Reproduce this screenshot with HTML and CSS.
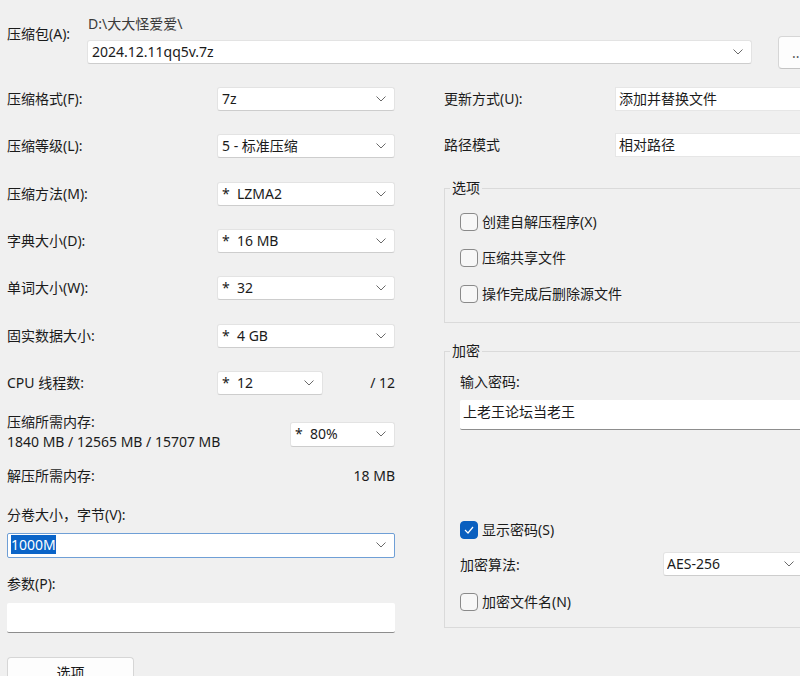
FILE: index.html
```html
<!DOCTYPE html>
<html lang="zh-CN">
<head>
<meta charset="utf-8">
<title>添加到压缩包</title>
<link rel="stylesheet" href="styles.css">
</head>
<body>
<div class="page">
  <div class="top">
    <div class="top-label">压缩包(A):</div>
    <div class="top-mid">
      <div class="path">D:\大大怪爱爱\</div>
      <div class="combo combo-wide"><span class="val">2024.12.11qq5v.7z</span><svg class="chev" width="10" height="6" viewBox="0 0 10 6"><polyline points="0.5,0.5 5,5 9.5,0.5" fill="none" stroke="#6a6a6a" stroke-width="1"/></svg></div>
    </div>
    <div class="btn btn-dots">...</div>
  </div>

  <div class="main">
    <div class="left">
      <div class="rows">
        <div class="row"><span class="lab">压缩格式(F):</span><div class="combo"><span class="val">7z</span><svg class="chev" width="10" height="6" viewBox="0 0 10 6"><polyline points="0.5,0.5 5,5 9.5,0.5" fill="none" stroke="#6a6a6a" stroke-width="1"/></svg></div></div>
        <div class="row"><span class="lab">压缩等级(L):</span><div class="combo"><span class="val">5 - 标准压缩</span><svg class="chev" width="10" height="6" viewBox="0 0 10 6"><polyline points="0.5,0.5 5,5 9.5,0.5" fill="none" stroke="#6a6a6a" stroke-width="1"/></svg></div></div>
        <div class="row"><span class="lab">压缩方法(M):</span><div class="combo"><span class="val">*&nbsp; LZMA2</span><svg class="chev" width="10" height="6" viewBox="0 0 10 6"><polyline points="0.5,0.5 5,5 9.5,0.5" fill="none" stroke="#6a6a6a" stroke-width="1"/></svg></div></div>
        <div class="row"><span class="lab">字典大小(D):</span><div class="combo"><span class="val">*&nbsp; 16 MB</span><svg class="chev" width="10" height="6" viewBox="0 0 10 6"><polyline points="0.5,0.5 5,5 9.5,0.5" fill="none" stroke="#6a6a6a" stroke-width="1"/></svg></div></div>
        <div class="row"><span class="lab">单词大小(W):</span><div class="combo"><span class="val">*&nbsp; 32</span><svg class="chev" width="10" height="6" viewBox="0 0 10 6"><polyline points="0.5,0.5 5,5 9.5,0.5" fill="none" stroke="#6a6a6a" stroke-width="1"/></svg></div></div>
        <div class="row"><span class="lab">固实数据大小:</span><div class="combo"><span class="val">*&nbsp; 4 GB</span><svg class="chev" width="10" height="6" viewBox="0 0 10 6"><polyline points="0.5,0.5 5,5 9.5,0.5" fill="none" stroke="#6a6a6a" stroke-width="1"/></svg></div></div>
        <div class="row"><span class="lab">CPU 线程数:</span><div class="combo combo-cpu"><span class="val">*&nbsp; 12</span><svg class="chev" width="10" height="6" viewBox="0 0 10 6"><polyline points="0.5,0.5 5,5 9.5,0.5" fill="none" stroke="#6a6a6a" stroke-width="1"/></svg></div><span class="right-num">/ 12</span></div>
      </div>

      <div class="mem">
        <div class="mem-text">
          <div class="line">压缩所需内存:</div>
          <div class="line">1840 MB / 12565 MB / 15707 MB</div>
        </div>
        <div class="combo combo-mem"><span class="val">*&nbsp; 80%</span><svg class="chev" width="10" height="6" viewBox="0 0 10 6"><polyline points="0.5,0.5 5,5 9.5,0.5" fill="none" stroke="#6a6a6a" stroke-width="1"/></svg></div>
      </div>

      <div class="line-row"><span>解压所需内存:</span><span>18 MB</span></div>

      <div class="line vol-label">分卷大小，字节(V):</div>
      <div class="combo combo-vol"><span class="val"><span class="sel">1000M</span></span><svg class="chev" width="10" height="6" viewBox="0 0 10 6"><polyline points="0.5,0.5 5,5 9.5,0.5" fill="none" stroke="#6a6a6a" stroke-width="1"/></svg></div>

      <div class="line param-label">参数(P):</div>
      <div class="textbox param-box"></div>

      <div class="btn btn-opt">选项</div>
    </div>

    <div class="right">
      <div class="rrow"><span class="rlab">更新方式(U):</span><div class="flatbox">添加并替换文件</div></div>
      <div class="rrow rrow2"><span class="rlab">路径模式</span><div class="flatbox">相对路径</div></div>

      <fieldset class="group group-opt">
        <legend>选项</legend>
        <div class="checks">
          <div class="check"><span class="cb"></span><span>创建自解压程序(X)</span></div>
          <div class="check"><span class="cb"></span><span>压缩共享文件</span></div>
          <div class="check"><span class="cb"></span><span>操作完成后删除源文件</span></div>
        </div>
      </fieldset>

      <fieldset class="group group-enc">
        <legend>加密</legend>
        <div class="line">输入密码:</div>
        <div class="textbox pw-box">上老王论坛当老王</div>
        <div class="check show-pw"><span class="cb cb-on"><svg width="12" height="10" viewBox="0 0 12 10"><polyline points="2,5 5,8 10,2" fill="none" stroke="#ffffff" stroke-width="1.2"/></svg></span><span>显示密码(S)</span></div>
        <div class="algo-row"><span class="alab">加密算法:</span><div class="combo combo-aes"><span class="val">AES-256</span><svg class="chev" width="10" height="6" viewBox="0 0 10 6"><polyline points="0.5,0.5 5,5 9.5,0.5" fill="none" stroke="#6a6a6a" stroke-width="1"/></svg></div></div>
        <div class="check enc-name"><span class="cb"></span><span>加密文件名(N)</span></div>
      </fieldset>
    </div>
  </div>
</div>
</body>
</html>
```

FILE: styles.css
```css
html, body {
  margin: 0;
  padding: 0;
  width: 800px;
  height: 676px;
  overflow: hidden;
  background: #f0f0f0;
}

body {
  font-family: "Noto Sans", "Noto Sans CJK SC", sans-serif;
  font-size: 14px;
  line-height: 20px;
  color: #1b1b1b;
}

.page {
  width: 840px;
}

/* top */
.top {
  height: 87px;
  box-sizing: border-box;
  padding: 14px 0 0 7px;
  display: flex;
  align-items: flex-start;
}

.top-label {
  width: 80px;
  margin-top: 10px;
}

.top-mid {
  width: 665px;
}

.path {
  color: #3a3a3a;
  padding-left: 1px;
}

.combo {
  box-sizing: border-box;
  height: 24px;
  background: #ffffff;
  border: 1px solid #e3e3e3;
  border-bottom-color: #cdcdcd;
  border-radius: 3px;
  display: flex;
  align-items: center;
  padding: 0 8px 0 4px;
}

.combo .val {
  flex: 1;
  white-space: nowrap;
  overflow: hidden;
}

.combo .chev {
  flex: none;
}

.combo-wide {
  margin-top: 6px;
  width: 665px;
}

.btn {
  box-sizing: border-box;
  background: #fdfdfd;
  border: 1px solid #d6d6d6;
  border-bottom-color: #c4c4c4;
  border-radius: 4px;
  display: flex;
  align-items: center;
  justify-content: center;
}

.btn-dots {
  margin: 22px 0 0 26px;
  width: 50px;
  height: 33px;
  justify-content: flex-start;
  padding-left: 13px;
  color: #555;
}

/* main */
.main {
  display: flex;
  padding-left: 7px;
  gap: 49px;
}

.left {
  width: 388px;
  flex: none;
  display: flex;
  flex-direction: column;
}

.rows {
  display: flex;
  flex-direction: column;
  gap: 23.33px;
}

.row {
  display: flex;
  align-items: center;
  height: 24px;
}

.row .lab {
  width: 210px;
  flex: none;
}

.row .combo {
  width: 178px;
}

.row .combo-cpu {
  width: 106px;
}

.right-num {
  margin-left: auto;
}

.mem {
  margin-top: 17px;
  display: flex;
  align-items: flex-start;
}

.mem-text {
  flex: 1;
}

.combo-mem {
  margin-top: 10px;
  width: 105px;
  height: 25px;
}

.line-row {
  margin-top: 14px;
  display: flex;
  justify-content: space-between;
}

.vol-label {
  margin-top: 19px;
}

.combo-vol {
  margin-top: 8px;
  height: 25px;
  border: 1px solid #6f9fd6;
  border-radius: 2px;
  padding-left: 3px;
}

.sel {
  background: #0a64c8;
  color: #ffffff;
}

.param-label {
  margin-top: 16px;
}

.textbox {
  box-sizing: border-box;
  background: #ffffff;
  border-bottom: 1px solid #8d8d8d;
  border-radius: 2px;
}

.param-box {
  margin-top: 9px;
  height: 30px;
}

.btn-opt {
  margin-top: 24px;
  width: 127px;
  height: 32px;
}

/* right */
.right {
  width: 380px;
  flex: none;
  display: flex;
  flex-direction: column;
}

.rrow {
  display: flex;
  align-items: center;
  height: 24px;
}

.rrow2 {
  margin-top: 22px;
}

.rlab {
  width: 171px;
  flex: none;
}

.flatbox {
  flex: 1;
  height: 24px;
  box-sizing: border-box;
  background: #ffffff;
  border: 1px solid #e6e6e6;
  padding-left: 3px;
  line-height: 22px;
}

.group {
  margin: 0;
  min-width: 0;
  border: 1px solid #dadada;
  border-right: none;
  border-radius: 0;
}

.group legend {
  padding: 0 2px;
  margin-left: -10px;
  line-height: 20px;
}

.group-opt {
  margin-top: 21px;
  padding: 14px 0 18px 15px;
}

.checks {
  display: flex;
  flex-direction: column;
  gap: 16px;
}

.check {
  display: flex;
  align-items: center;
  height: 20px;
  gap: 4px;
}

.cb {
  box-sizing: border-box;
  width: 18px;
  height: 18px;
  border: 1px solid #8a8a8a;
  border-radius: 4px;
  background: #f7f7f7;
  flex: none;
  display: flex;
  align-items: center;
  justify-content: center;
}

.cb-on {
  background: #0a5fbf;
  border-color: #0a5fbf;
}

.group-enc {
  margin-top: 18px;
  padding: 11px 0 15px 15px;
}

.pw-box {
  margin-top: 8px;
  height: 30px;
  padding: 2px 0 0 3px;
}

.show-pw {
  margin-top: 90px;
}

.algo-row {
  margin-top: 12px;
  display: flex;
  align-items: center;
  height: 24px;
}

.alab {
  width: 203px;
  flex: none;
  padding-top: 2px;
}

.combo-aes {
  width: 140px;
  height: 24px;
  padding-left: 3px;
}

.enc-name {
  margin-top: 16px;
}
```
